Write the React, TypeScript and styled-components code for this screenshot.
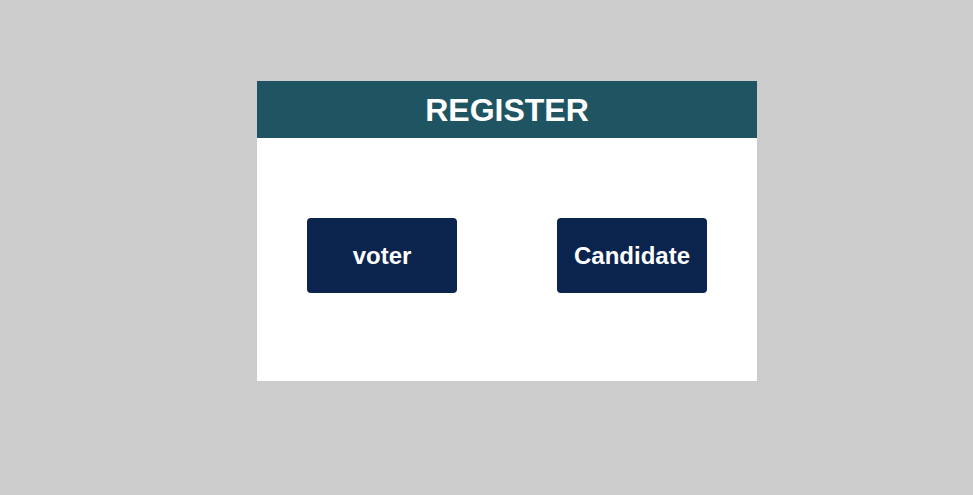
import React from "react";
import styled, { createGlobalStyle } from "styled-components";

const GlobalStyle = createGlobalStyle`
  html, body {
    margin: 0;
    padding: 0;
    background: #cccccc;
    font-family: "Liberation Sans", Arial, sans-serif;
  }
`;

const Page = styled.div`
  min-height: 495px;
  padding: 81px 0 0 257px;
  box-sizing: border-box;
`;

const Card = styled.div`
  width: 500px;
  height: 300px;
  background: #ffffff;
  display: flex;
  flex-direction: column;
`;

const Header = styled.div`
  height: 57px;
  background: #1f5563;
  display: flex;
  align-items: center;
  justify-content: center;
`;

const Title = styled.h1`
  margin: 0;
  color: #ffffff;
  font-size: 32px;
  font-weight: bold;
  line-height: 37px;
  padding-top: 2px;
`;

const Body = styled.div`
  display: flex;
  justify-content: space-around;
  padding-top: 80px;
`;

const Button = styled.button`
  width: 150px;
  height: 75px;
  border: none;
  border-radius: 4px;
  background: #0a244d;
  color: #ffffff;
  font-family: "Liberation Sans", Arial, sans-serif;
  font-size: 24px;
  font-weight: bold;
  cursor: pointer;
  padding: 0;
`;

export default function App() {
  return (
    <>
      <GlobalStyle />
      <Page>
        <Card>
          <Header>
            <Title>REGISTER</Title>
          </Header>
          <Body>
            <Button>voter</Button>
            <Button>Candidate</Button>
          </Body>
        </Card>
      </Page>
    </>
  );
}
